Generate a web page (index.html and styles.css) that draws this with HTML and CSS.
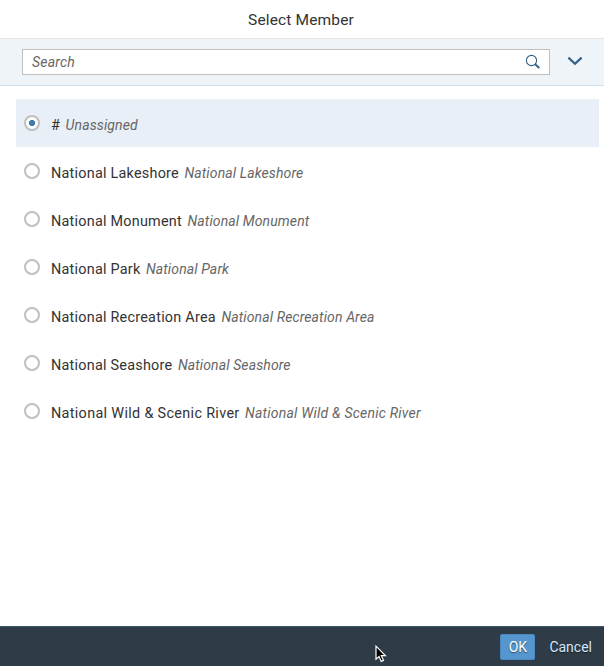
FILE: index.html
```html
<!DOCTYPE html>
<html lang="en">
<head>
<meta charset="utf-8">
<title>Select Member</title>
<link rel="stylesheet" href="styles.css">
</head>
<body>
<div class="dialog">
  <header class="title">Select Member</header>
  <div class="toolbar">
    <div class="search">
      <span class="placeholder">Search</span>
      <svg class="magnifier" width="16" height="16" viewBox="0 0 16 16"><circle cx="6.5" cy="6.5" r="5.1"/><path class="handle" d="M10.1 10.3L14.3 14.1"/></svg>
    </div>
    <svg class="chevron" width="16" height="10" viewBox="0 0 16 10"><path d="M1.4 1.6L8 7.7L14.6 1.6"/></svg>
  </div>
  <ul class="list">
    <li class="row selected"><span class="radio"></span><span class="name">#</span><span class="desc">Unassigned</span></li>
    <li class="row"><span class="radio"></span><span class="name">National Lakeshore</span><span class="desc">National Lakeshore</span></li>
    <li class="row"><span class="radio"></span><span class="name">National Monument</span><span class="desc">National Monument</span></li>
    <li class="row"><span class="radio"></span><span class="name">National Park</span><span class="desc">National Park</span></li>
    <li class="row"><span class="radio"></span><span class="name">National Recreation Area</span><span class="desc">National Recreation Area</span></li>
    <li class="row"><span class="radio"></span><span class="name">National Seashore</span><span class="desc">National Seashore</span></li>
    <li class="row long"><span class="radio"></span><span class="name">National Wild &amp; Scenic River</span><span class="desc">National Wild &amp; Scenic River</span></li>
  </ul>
  <footer class="footer">
    <span class="ok">OK</span>
    <span class="cancel">Cancel</span>
  </footer>
</div>
<svg class="cursor" width="12" height="18" viewBox="0 0 12 18"><path d="M1 1.2V14.2L4 11.5L6.2 16.4L8.5 15.4L6.4 10.7H10.4Z"/></svg>
</body>
</html>
```

FILE: styles.css
```css
* { box-sizing: border-box; }
body {
  margin: 0;
  font-family: Roboto, "Liberation Sans", sans-serif;
  font-size: 14px;
  color: #333;
  background: #fff;
}
.dialog { display: flex; flex-direction: column; height: 666px; }
.title {
  height: 38px;
  line-height: 40px;
  text-align: center;
  font-size: 15.5px;
  letter-spacing: 0.15px;
  padding-right: 2px;
}
.toolbar {
  display: flex;
  align-items: center;
  height: 48px;
  padding: 0 21px 0 22px;
  background: #eff4f8;
  border-top: 1px solid #e5e5e5;
  border-bottom: 1px solid #d1dfeb;
}
.search {
  display: flex;
  align-items: center;
  justify-content: space-between;
  width: 528px;
  height: 26px;
  padding: 0 8px 0 9px;
  background: #fff;
  border: 1px solid #bfbfbf;
}
.placeholder { font-style: italic; color: #666; letter-spacing: 0.2px; }
.magnifier { fill: none; stroke: #346187; stroke-width: 1.1; }
.handle { stroke-width: 2; }
.chevron {
  margin-left: 17px;
  margin-top: -2px;
  fill: none;
  stroke: #346187;
  stroke-width: 2.2;
}
.list {
  flex: 1;
  list-style: none;
  margin: 0;
  padding: 13px 5px 0 16px;
}
.row {
  display: flex;
  align-items: center;
  height: 48px;
  padding-left: 8px;
  line-height: 20px;
  white-space: nowrap;
}
.selected { background: #e8eff6; }
.radio {
  width: 16px;
  height: 16px;
  margin-right: 11px;
  border: 2px solid #bfbfbf;
  border-radius: 50%;
  background: #fff;
}
.selected .radio { background: radial-gradient(circle, #427cac 2.8px, #fff 3.4px); }
.name { padding-top: 6px; font-size: 14.4px; letter-spacing: 0.24px; }
.desc { padding: 4px 0 0 5.5px; font-size: 14px; font-style: italic; color: #666; letter-spacing: 0.12px; }
.long .name { letter-spacing: 0.33px; }
.long .desc { letter-spacing: 0.22px; }
.footer {
  display: flex;
  align-items: center;
  justify-content: flex-end;
  height: 40px;
  padding: 1px 12px 0 0;
  background: #2f3c48;
  border-top: 1px solid #3c5768;
}
.ok {
  width: 35px;
  height: 26px;
  margin-right: 14px;
  text-align: center;
  color: #fff;
  background: #5496cd;
  border: 1px solid #4a8ac0;
  border-radius: 2px;
  line-height: 25px;
  text-shadow: 0 1px 1px rgba(0, 0, 0, .5);
}
.cancel { color: #d1e8ff; text-shadow: 0 1px 1px rgba(0, 0, 0, .5); }
.cursor { position: absolute; left: 375px; top: 645px; fill: #000; stroke: #fff; stroke-width: 1.2; }
```
